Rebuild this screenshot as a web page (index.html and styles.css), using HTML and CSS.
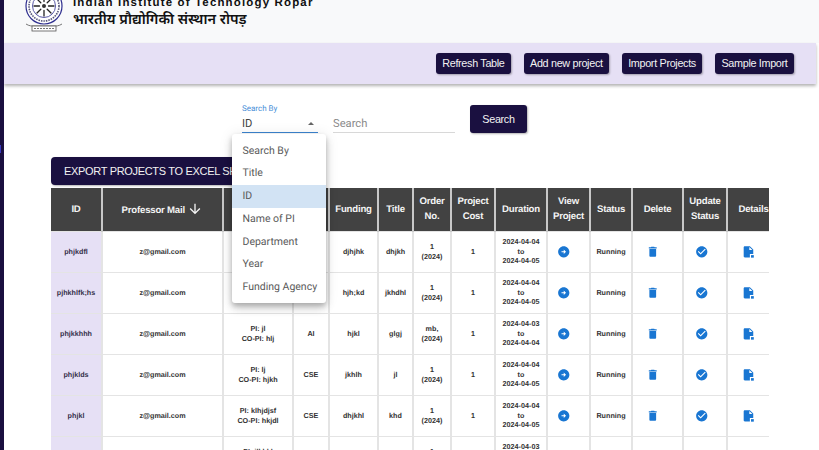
FILE: index.html
```html
<!DOCTYPE html>
<html lang="en">
<head>
<meta charset="utf-8">
<title>Projects</title>
<link rel="stylesheet" href="styles.css">
</head>
<body>
<svg class="defs" width="0" height="0" aria-hidden="true">
  <symbol id="i-go" viewBox="0 0 24 24"><path d="M22 12c0-5.52-4.48-10-10-10S2 6.48 2 12s4.48 10 10 10 10-4.48 10-10zm-10 1H8v-2h4V8l4 4-4 4v-3z"/></symbol>
  <symbol id="i-del" viewBox="0 0 24 24"><path d="M6 19c0 1.1.9 2 2 2h8c1.1 0 2-.9 2-2V7H6v12zM19 4h-3.5l-1-1h-5l-1 1H5v2h14V4z"/></symbol>
  <symbol id="i-ok" viewBox="0 0 24 24"><path d="M12 2C6.48 2 2 6.48 2 12s4.48 10 10 10 10-4.48 10-10S17.52 2 12 2zm-2 15l-5-5 1.41-1.41L10 14.17l7.59-7.59L19 8l-9 9z"/></symbol>
  <symbol id="i-doc" viewBox="0 0 24 24"><path d="M14 2H5c-1.100 0-2 .9-2 2v16c0 1.100.9 2 2 2h9v-6h6V8l-6-6zm-1 7V3.500L18.500 9H13z"/><rect x="16" y="18" width="5" height="4.500"/></symbol>
</svg>
<div class="app">
  <aside class="rail"><span class="rail-mark"></span></aside>
  <main class="main">
    <header class="brand">
      <svg class="logo" width="38" height="36" viewBox="0 0 38 36" aria-hidden="true">
        <circle cx="19" cy="9" r="18" fill="#fff" stroke="#2f2f8f" stroke-width="1.2"/>
        <circle cx="19" cy="9" r="15" fill="#fff" stroke="#55557a" stroke-width="1.6" stroke-dasharray="1.5 1"/>
        <circle cx="19" cy="9" r="11.5" fill="none" stroke="#2f2f8f" stroke-width=".8"/>
        <g stroke="#222" stroke-width="1.3" stroke-linecap="round">
          <path d="M19 4.500V-1M19 13.500V19M14.500 9H9M23.500 9H29M15.800 5.800 12 2M22.200 12.200 26 16M22.200 5.800 26 2M15.800 12.200 12 16"/>
        </g>
        <circle cx="19" cy="9" r="2" fill="#333"/>
        <path d="M1 27c3 2 6 2 7 2h22c1 0 4 0 7-2" fill="none" stroke="#777" stroke-width="1"/>
        <rect x="7" y="29" width="24" height="5" fill="#fff" stroke="#555" stroke-width=".8"/>
        <path d="M9 31.500h20" stroke="#777" stroke-width="1.200" stroke-dasharray="2 1"/>
      </svg>
      <div class="brand-text">
        <div class="brand-en">Indian Institute of Technology Ropar</div>
        <div class="brand-hi">भारतीय प्रौद्योगिकी संस्थान रोपड़</div>
      </div>
    </header>
    <nav class="toolbar">
      <button class="btn">Refresh Table</button>
      <button class="btn">Add new project</button>
      <button class="btn">Import Projects</button>
      <button class="btn">Sample Import</button>
    </nav>
    <section class="search">
      <div class="field field-select">
        <span class="field-label">Search By</span>
        <div class="field-value">ID<span class="caret"></span></div>
        <ul class="menu">
          <li>Search By</li>
          <li>Title</li>
          <li class="is-selected">ID</li>
          <li>Name of PI</li>
          <li>Department</li>
          <li>Year</li>
          <li>Funding Agency</li>
        </ul>
      </div>
      <div class="field field-input"><div class="field-value placeholder">Search</div></div>
      <button class="btn btn-search">Search</button>
    </section>
    <button class="btn btn-export">EXPORT PROJECTS TO EXCEL SHEET</button>
    <table class="grid">
      <colgroup>
        <col class="c-id"><col class="c-mail"><col class="c-pi"><col class="c-dept"><col class="c-fund"><col class="c-title"><col class="c-order"><col class="c-cost"><col class="c-dur"><col class="c-view"><col class="c-status"><col class="c-del"><col class="c-upd"><col class="c-det">
      </colgroup>
      <thead>
        <tr>
          <th>ID</th>
          <th>Professor Mail <svg class="sort" width="16" height="16" viewBox="0 0 24 24"><path d="M20 12l-1.410-1.410L13 16.170V4h-2v12.170l-5.580-5.590L4 12l8 8 8-8z"/></svg></th>
          <th>Name of PI</th><th>Dept</th><th>Funding</th><th>Title</th><th>Order No.</th><th>Project Cost</th><th>Duration</th><th>View Project</th><th>Status</th><th>Delete</th><th>Update Status</th><th class="th-det">Details</th>
        </tr>
      </thead>
      <tbody>
        <tr>
          <td class="td-id">phjkdfl</td><td>z@gmail.com</td><td>PI: jl<br>CO-PI: hlj</td><td>CSE</td><td>djhjhk</td><td>dhjkh</td><td>1<br>(2024)</td><td>1</td><td>2024-04-04<br>to<br>2024-04-05</td>
          <td class="td-act"><svg class="ic"><use href="#i-go"/></svg></td><td>Running</td><td class="td-act"><svg class="ic"><use href="#i-del"/></svg></td><td class="td-upd"><svg class="ic"><use href="#i-ok"/></svg></td><td class="td-det"><svg class="ic"><use href="#i-doc"/></svg></td>
        </tr>
        <tr>
          <td class="td-id">pjhkhlfk;hs</td><td>z@gmail.com</td><td>PI: jl<br>CO-PI: hlj</td><td>CSE</td><td>hjh;kd</td><td>jkhdhl</td><td>1<br>(2024)</td><td>1</td><td>2024-04-04<br>to<br>2024-04-05</td>
          <td class="td-act"><svg class="ic"><use href="#i-go"/></svg></td><td>Running</td><td class="td-act"><svg class="ic"><use href="#i-del"/></svg></td><td class="td-upd"><svg class="ic"><use href="#i-ok"/></svg></td><td class="td-det"><svg class="ic"><use href="#i-doc"/></svg></td>
        </tr>
        <tr>
          <td class="td-id">phjkkhhh</td><td>z@gmail.com</td><td>PI: jl<br>CO-PI: hlj</td><td>AI</td><td>hjkl</td><td>glgj</td><td>mb,<br>(2024)</td><td>1</td><td>2024-04-03<br>to<br>2024-04-04</td>
          <td class="td-act"><svg class="ic"><use href="#i-go"/></svg></td><td>Running</td><td class="td-act"><svg class="ic"><use href="#i-del"/></svg></td><td class="td-upd"><svg class="ic"><use href="#i-ok"/></svg></td><td class="td-det"><svg class="ic"><use href="#i-doc"/></svg></td>
        </tr>
        <tr>
          <td class="td-id">phjklds</td><td>z@gmail.com</td><td>PI: lj<br>CO-PI: hjkh</td><td>CSE</td><td>jkhlh</td><td>jl</td><td>1<br>(2024)</td><td>1</td><td>2024-04-04<br>to<br>2024-04-05</td>
          <td class="td-act"><svg class="ic"><use href="#i-go"/></svg></td><td>Running</td><td class="td-act"><svg class="ic"><use href="#i-del"/></svg></td><td class="td-upd"><svg class="ic"><use href="#i-ok"/></svg></td><td class="td-det"><svg class="ic"><use href="#i-doc"/></svg></td>
        </tr>
        <tr>
          <td class="td-id">phjkl</td><td>z@gmail.com</td><td>PI: klhjdjsf<br>CO-PI: hkjdl</td><td>CSE</td><td>dhjkhl</td><td>khd</td><td>1<br>(2024)</td><td>1</td><td>2024-04-04<br>to<br>2024-04-05</td>
          <td class="td-act"><svg class="ic"><use href="#i-go"/></svg></td><td>Running</td><td class="td-act"><svg class="ic"><use href="#i-del"/></svg></td><td class="td-upd"><svg class="ic"><use href="#i-ok"/></svg></td><td class="td-det"><svg class="ic"><use href="#i-doc"/></svg></td>
        </tr>
        <tr>
          <td class="td-id">phjk</td><td>z@gmail.com</td><td>PI: jlkhkl<br>CO-PI: hkl</td><td>CSE</td><td>hjkl</td><td>jkl</td><td>1<br>(2024)</td><td>1</td><td>2024-04-03<br>to<br>2024-04-04</td>
          <td class="td-act"><svg class="ic"><use href="#i-go"/></svg></td><td>Running</td><td class="td-act"><svg class="ic"><use href="#i-del"/></svg></td><td class="td-upd"><svg class="ic"><use href="#i-ok"/></svg></td><td class="td-det"><svg class="ic"><use href="#i-doc"/></svg></td>
        </tr>
      </tbody>
    </table>
  </main>
</div>
</body>
</html>
```
FILE: styles.css
```css
* { box-sizing: border-box; }
html, body { margin: 0; height: 450px; overflow: hidden; background: #fff; }
body { font-family: "Liberation Sans", Arial, sans-serif; text-rendering: geometricPrecision; }
.defs { position: absolute; }

.app { display: flex; height: 450px; overflow: hidden; }
.rail { flex: 0 0 4px; background: #1a1040; position: relative; }
.rail-mark { position: absolute; left: 0; top: 145px; width: 1px; height: 8px; background: #3a3ac0; }
.main { flex: 1; min-width: 0; }

.brand { height: 43px; background: #f8f9fa; display: flex; align-items: flex-start; overflow: hidden; padding-left: 21px; }
.logo { flex: none; margin-top: -3px; }
.brand-text { margin-left: 10px; margin-top: -3px; color: #111; }
.brand-en { font-size: 11.5px; line-height: 13px; letter-spacing: 1.15px; font-weight: 700; white-space: nowrap; }
.brand-hi { font-family: "Noto Sans", "DejaVu Sans", sans-serif; font-size: 14.400px; line-height: 19px; font-weight: 600; white-space: nowrap; }

.toolbar { height: 41px; width: 812px; background: #e6e0f5; display: flex; justify-content: flex-end; align-items: center; gap: 12.500px; padding-right: 22px; box-shadow: 0 2px 3px rgba(0,0,0,.3); }

.btn { border: 0; background: #1a1040; color: #f2f2f2; font-family: "Liberation Sans", Arial, sans-serif; border-radius: 3px; font-size: 10.800px; letter-spacing: -.32px; line-height: 13px; height: 21px; padding: 0 6.500px; white-space: nowrap; box-shadow: 1px 1px 2px rgba(0,0,0,.3); }

.search { display: flex; align-items: flex-start; padding: 21px 0 0 238px; height: 73px; font-family: Roboto, sans-serif; }
.field { position: relative; height: 28px; padding-top: 12px; }
.field-select { width: 76px; border-bottom: 1px solid #3d85d0; }
.field-input { width: 122px; margin-left: 15px; border-bottom: 1px solid #d8d8d8; }
.field-label { position: absolute; left: 0; top: -1px; font-size: 8px; line-height: 10px; color: #4a8fd8; }
.field-value { font-size: 11.200px; line-height: 13px; color: #444; position: relative; }
.placeholder { color: #8a8a8a; }
.caret { position: absolute; right: 4px; top: 5px; width: 0; height: 0; border-left: 3.500px solid transparent; border-right: 3.500px solid transparent; border-bottom: 3.500px solid #666; }
.btn-search { height: 28px; width: 57px; margin-left: 15px; }

.menu { position: absolute; z-index: 5; left: -10px; top: 29px; width: 94px; margin: 0; padding: 5.500px 0 3.500px; list-style: none; background: #fff; border-radius: 3px; box-shadow: 0 3px 5px rgba(0,0,0,.2), 0 6px 10px rgba(0,0,0,.12), 0 1px 14px rgba(0,0,0,.1); }
.menu li { height: 22.800px; line-height: 22.800px; padding-left: 10.500px; font-size: 10.500px; color: #5a5a5a; white-space: nowrap; }
.menu .is-selected { background: #d2e3f4; }

.btn-export { display: block; margin: 0 0 3px 47px; height: 28px; width: 216px; text-align: left; padding-left: 13px; font-size: 11px; letter-spacing: -.32px; border-radius: 4px; }

.grid { margin-left: 47px; width: 718px; table-layout: fixed; border-collapse: collapse; }
.c-id { width: 51px; } .c-mail { width: 121px; } .c-pi { width: 70px; } .c-dept { width: 36px; } .c-fund { width: 49px; } .c-title { width: 35px; } .c-order { width: 38px; } .c-cost { width: 44px; } .c-dur { width: 52px; } .c-view { width: 43px; } .c-status { width: 42px; } .c-del { width: 51px; } .c-upd { width: 44px; } .c-det { width: 42px; }

.grid th { height: 43px; background: #424242; color: #f4f4f4; font-size: 9.600px; letter-spacing: -.2px; line-height: 15px; font-weight: 700; text-align: center; padding: 0 2px; border: 2px solid #c8c8c8; border-width: 0 2px; }
.grid th:first-child { border-left: 0; }
.grid th:last-child { border-right: 0; }
.grid .th-det { white-space: nowrap; padding: 0 0 0 10px; }
.sort { vertical-align: -4px; fill: #f4f4f4; }
.grid td { height: 41px; padding: 0; text-align: center; font-size: 7.200px; line-height: 9.900px; font-weight: 700; color: #333; border: 1px solid #e4e4e4; border-width: 1px 2px; overflow: hidden; }
.grid td:first-child { border-left: 0; }
.grid td:last-child { border-right: 0; }
.grid .td-id { background: #e6e0f5; color: #35304a; }
.grid .td-act { padding-right: 9px; }
.grid .td-upd { padding-right: 6.500px; }
.grid .td-det { padding-left: 1px; }
.ic { width: 13.500px; height: 13.500px; fill: #1976d2; vertical-align: middle; }
```
